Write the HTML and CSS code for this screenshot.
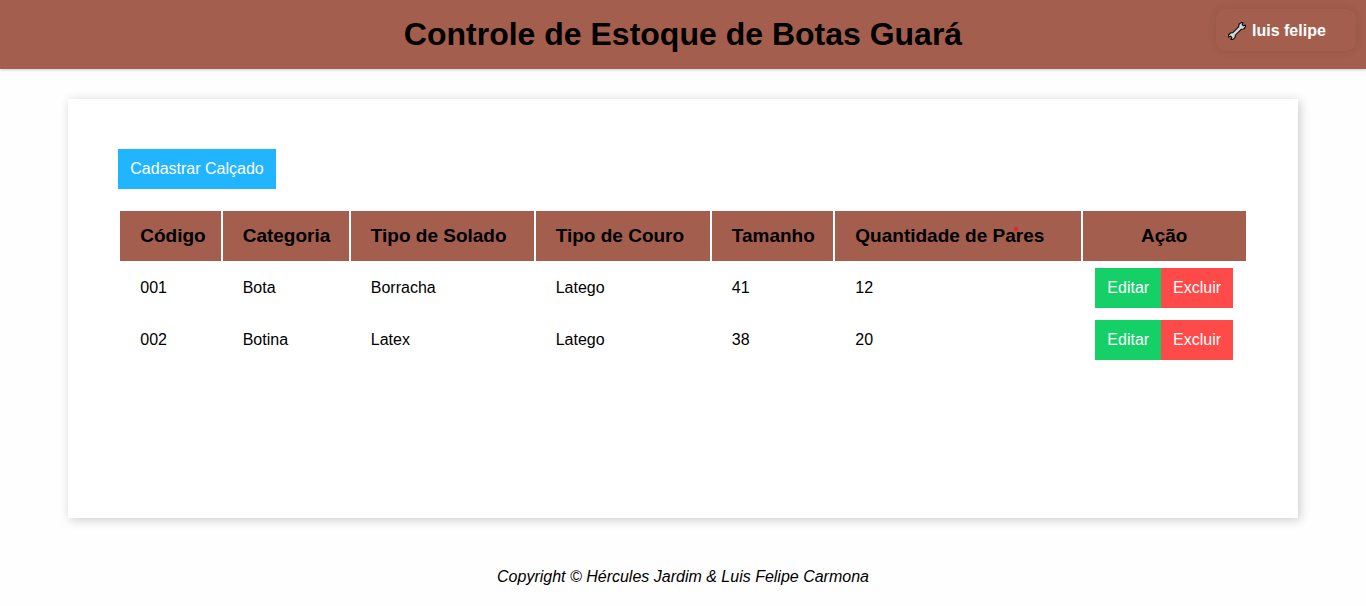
FILE: index.html
```html
<!DOCTYPE html>
<html lang="pt-BR">
<head>
<meta charset="utf-8">
<meta name="viewport" content="width=device-width, initial-scale=1">
<title>Controle de Estoque de Botas Guará</title>
<link rel="stylesheet" href="styles.css">
</head>
<body>
<header class="topbar">
  <h1 class="title">Controle de Estoque de Botas Guará</h1>
  <div class="user">
    <svg class="wrench" viewBox="0 0 20 20" aria-hidden="true">
      <path d="M11.6 5.8 12 3.3 14 1.6 16 1.6 15.2 3.6 16.4 4.8 18.4 4 18.4 6 16.7 8 14.2 8.4 8.4 14.2 8 16.7 6 18.4 4 18.4 4.8 16.4 3.6 15.2 1.6 16 1.6 14 3.3 12 5.8 11.6Z" fill="#d4dadb" stroke="#15100f" stroke-width="1.2" stroke-linejoin="round"/>
    </svg>
    <span>luis felipe</span>
  </div>
</header>
<main class="panel">
  <button class="btn btn-new" type="button">Cadastrar Calçado</button>
  <table class="stock">
    <colgroup>
      <col class="col-code"><col class="col-category"><col class="col-sole"><col class="col-leather"><col class="col-size"><col class="col-amount"><col class="col-action">
    </colgroup>
    <thead>
      <tr>
        <th scope="col">Código</th>
        <th scope="col">Categoria</th>
        <th scope="col">Tipo de Solado</th>
        <th scope="col">Tipo de Couro</th>
        <th scope="col">Tamanho</th>
        <th scope="col" class="marked">Quantidade de Pares</th>
        <th scope="col" class="action">Ação</th>
      </tr>
    </thead>
    <tbody>
      <tr>
        <td>001</td><td>Bota</td><td>Borracha</td><td>Latego</td><td>41</td><td>12</td>
        <td class="action"><div class="actions"><button class="btn btn-edit" type="button">Editar</button><button class="btn btn-delete" type="button">Excluir</button></div></td>
      </tr>
      <tr>
        <td>002</td><td>Botina</td><td>Latex</td><td>Latego</td><td>38</td><td>20</td>
        <td class="action"><div class="actions"><button class="btn btn-edit" type="button">Editar</button><button class="btn btn-delete" type="button">Excluir</button></div></td>
      </tr>
    </tbody>
  </table>
</main>
<footer class="footer">Copyright © Hércules Jardim &amp; Luis Felipe Carmona</footer>
</body>
</html>
```
FILE: styles.css
```css
* {
  box-sizing: border-box;
}

body {
  margin: 0;
  background: #fefefe;
  color: #000;
  font: 16px/20px "Liberation Sans", Arial, sans-serif;
}

.topbar {
  display: grid;
  grid-template-columns: 1fr auto 1fr;
  align-items: start;
  padding: 9px 10px 18px;
  background: #a35e4d;
  box-shadow: 0 1px 3px rgba(0, 0, 0, 0.2);
}

.title {
  grid-column: 2;
  margin: 8px 0 0;
  font-size: 32px;
  line-height: 34px;
}

.user {
  display: flex;
  justify-self: end;
  align-items: center;
  gap: 5px;
  min-width: 140px;
  padding: 11px 11px 10px;
  border-radius: 10px;
  box-shadow: 0 0 8px rgba(0, 0, 0, 0.1);
  color: #fff;
  font-weight: bold;
  line-height: 21px;
}

.wrench {
  width: 20px;
  height: 20px;
}

.panel {
  width: 90%;
  min-height: 419px;
  margin: 30px auto 0;
  padding: 50px;
  background: #fff;
  box-shadow: 2px 2px 10px rgba(0, 0, 0, 0.2);
}

.btn {
  height: 40px;
  padding: 0 12px;
  border: 0;
  border-radius: 0;
  color: #fff;
  font: inherit;
  cursor: pointer;
}

.btn-new {
  display: block;
  margin-bottom: 20px;
  background: #21b5ff;
}

.btn-edit {
  background: #15cf67;
}

.btn-delete {
  background: #ff4a4a;
}

.stock {
  width: 100%;
  table-layout: fixed;
  border-spacing: 2px;
}

.col-code { width: 9%; }
.col-category { width: 11.3%; }
.col-sole { width: 16.4%; }
.col-leather { width: 15.6%; }
.col-size { width: 10.9%; }
.col-amount { width: 22%; }
.col-action { width: 14.6%; }

.stock th,
.stock td {
  height: 50px;
  padding: 0 0 0 20px;
  text-align: left;
  white-space: nowrap;
}

.stock th {
  background: #a35e4d;
  font-size: 19px;
}

.stock .action {
  padding: 0;
  text-align: center;
}

.actions {
  display: flex;
  justify-content: center;
}

.marked {
  position: relative;
}

.marked::after {
  content: "";
  position: absolute;
  top: 16px;
  left: 179px;
  width: 4px;
  height: 4px;
  border-radius: 50%;
  background: #ed1c24;
}

.footer {
  padding: 49px 0 20px;
  font-style: italic;
  text-align: center;
}
```
